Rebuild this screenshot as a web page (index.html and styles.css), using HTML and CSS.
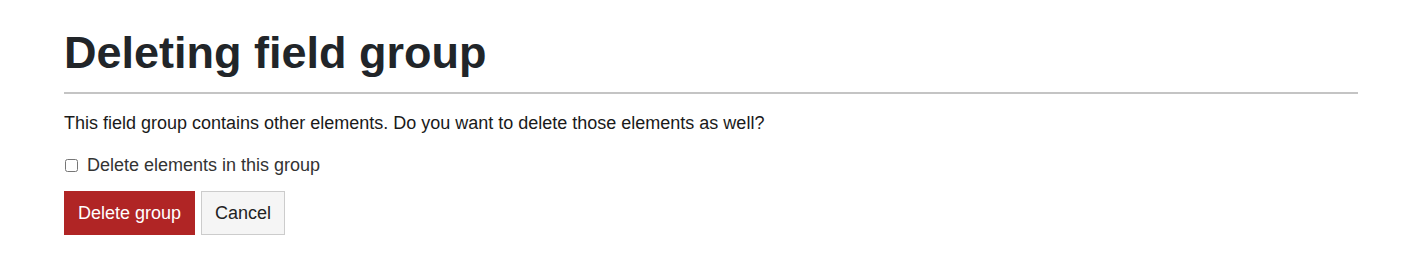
FILE: index.html
```html
<!DOCTYPE html>
<html>
<head>
<meta charset="utf-8">
<link rel="stylesheet" href="styles.css">
</head>
<body>
<div class="page">
  <h1 class="title">Deleting field group</h1>
  <p class="msg">This field group contains other elements. Do you want to delete those elements as well?</p>
  <label class="check"><input type="checkbox" class="box"> <span>Delete elements in this group</span></label>
  <div class="actions">
    <button class="btn btn-danger">Delete group</button>
    <button class="btn btn-default">Cancel</button>
  </div>
</div>
</body>
</html>
```
FILE: styles.css
```css
html, body { margin: 0; padding: 0; background: #fff; }
body { font-family: "Liberation Sans", Arial, sans-serif; color: #222; }
.page { padding: 26px 64px 0 64px; width: 1294px; }
.title {
  margin: 0;
  font-size: 45px;
  font-weight: bold;
  color: #212529;
  line-height: 54px;
  padding-bottom: 12px;
  border-bottom: 2px solid #c4c4c4;
}
.msg { margin: 17px 0 0 0; font-size: 18px; line-height: 24px; color: #1a1a1a; }
.check { display: flex; align-items: center; margin-top: 18px; font-size: 18px; color: #333; line-height: 24px; }
.box { margin: 0 9px 0 1px; width: 13px; height: 13px; }
.actions { display: flex; gap: 6px; margin-top: 14px; }
.btn { font-family: "Liberation Sans", Arial, sans-serif; font-size: 18px; height: 44px; padding: 0 13px; border-radius: 0; cursor: pointer; }
.btn-danger { background: #b02525; color: #fff; border: 1px solid #b02525; }
.btn-default { background: #f5f5f5; color: #222; border: 1px solid #ccc; }
```
